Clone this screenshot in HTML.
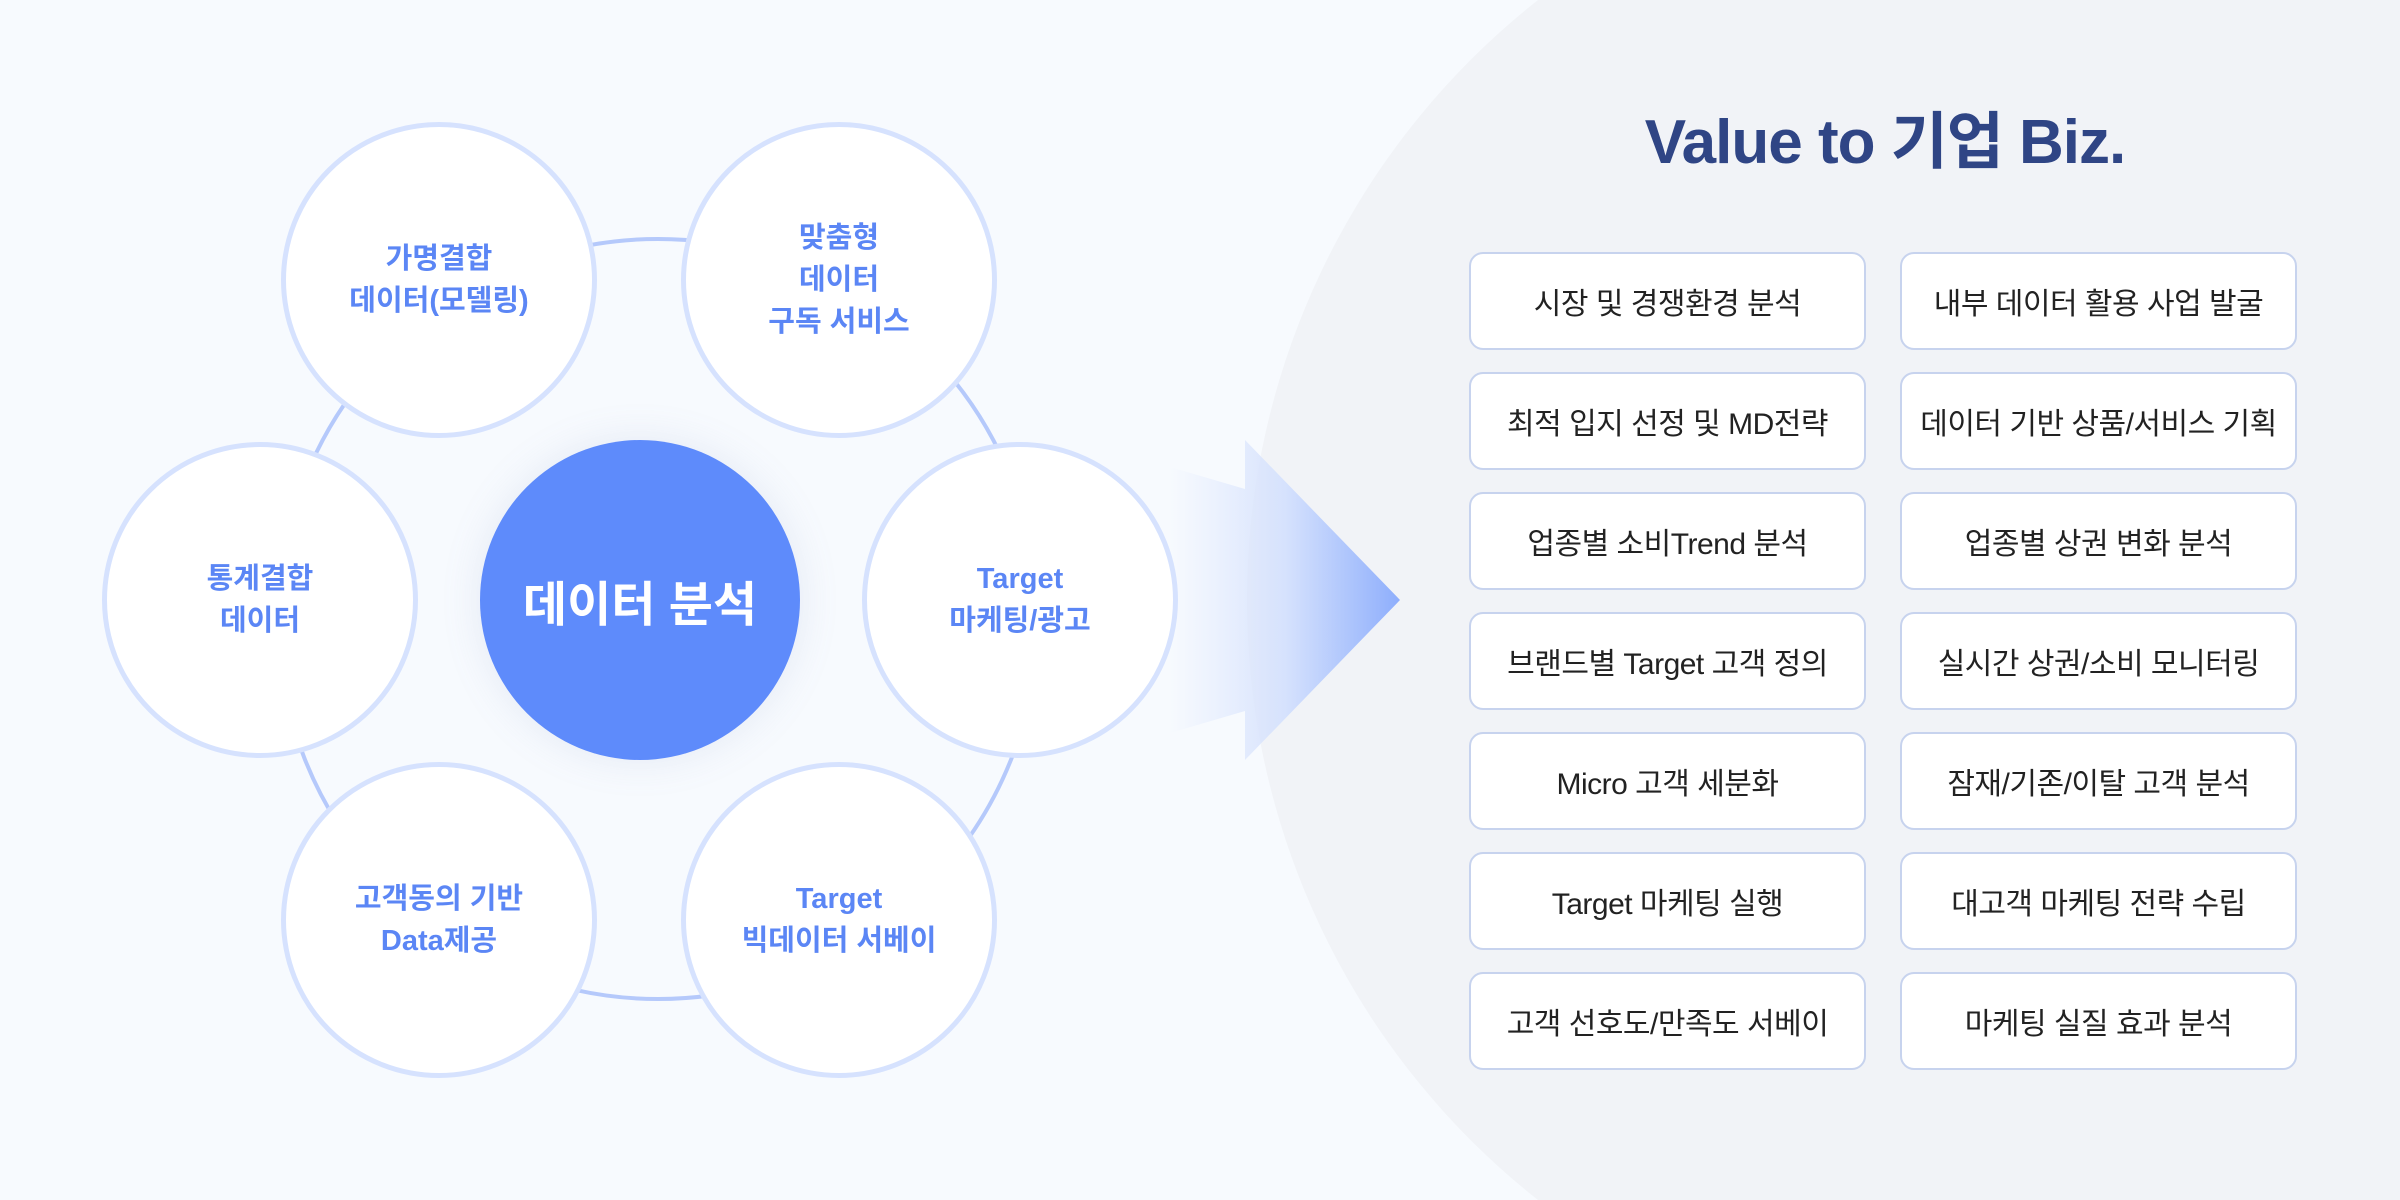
<!DOCTYPE html>
<html><head><meta charset="utf-8"><style>
html,body{margin:0;padding:0;width:2400px;height:1200px;overflow:hidden}
body{background:#f7fafe;position:relative;font-family:"Liberation Sans","Noto Sans CJK KR",sans-serif}
.c{position:absolute;width:306px;height:306px;border-radius:50%;background:#fff;border:5px solid #d6e2fe;display:flex;align-items:center;justify-content:center;text-align:center;color:#5b86f5;font-weight:bold;font-size:29px;line-height:42px}
.mid{position:absolute;left:480px;top:440px;width:320px;height:320px;border-radius:50%;background:#5e8bfb;color:#fff;font-weight:bold;font-size:48px;display:flex;align-items:center;justify-content:center;box-shadow:0 0 40px rgba(120,140,190,0.15)}
.title{position:absolute;left:1500px;width:770px;top:91px;text-align:center;font-size:62px;font-weight:bold;color:#2f4585;letter-spacing:-1px}
.b{position:absolute;width:393px;height:94px;border:2px solid #c7d3ee;border-radius:14px;background:#fff;display:flex;align-items:center;justify-content:center;font-size:30px;color:#222;letter-spacing:-0.5px}
</style></head><body>
<svg width="2400" height="1200" style="position:absolute;left:0;top:0">
<defs><linearGradient id="g" x1="1170" y1="0" x2="1400" y2="0" gradientUnits="userSpaceOnUse"><stop offset="0" stop-color="#dce6fd" stop-opacity="0"/><stop offset="0.5" stop-color="#d6e2fd"/><stop offset="1" stop-color="#8eaefc"/></linearGradient></defs>
<circle cx="2011" cy="600" r="764" fill="#f1f3f7"/>
<circle cx="658" cy="619" r="380" fill="none" stroke="#b5c9fb" stroke-width="4"/>
<polygon points="1170,467 1245,489 1245,440 1400,600 1245,760 1245,711 1170,733" fill="url(#g)"/>
</svg>
<div class="c" style="left:281px;top:122px">가명결합<br>데이터(모델링)</div>
<div class="c" style="left:681px;top:122px">맞춤형<br>데이터<br>구독 서비스</div>
<div class="c" style="left:862px;top:442px">Target<br>마케팅/광고</div>
<div class="c" style="left:681px;top:762px">Target<br>빅데이터 서베이</div>
<div class="c" style="left:281px;top:762px">고객동의 기반<br>Data제공</div>
<div class="c" style="left:102px;top:442px">통계결합<br>데이터</div>
<div class="mid">데이터 분석</div>
<div class="title">Value to 기업 Biz.</div>
<div class="b" style="left:1469px;top:252px">시장 및 경쟁환경 분석</div>
<div class="b" style="left:1900px;top:252px">내부 데이터 활용 사업 발굴</div>
<div class="b" style="left:1469px;top:372px">최적 입지 선정 및 MD전략</div>
<div class="b" style="left:1900px;top:372px">데이터 기반 상품/서비스 기획</div>
<div class="b" style="left:1469px;top:492px">업종별 소비Trend 분석</div>
<div class="b" style="left:1900px;top:492px">업종별 상권 변화 분석</div>
<div class="b" style="left:1469px;top:612px">브랜드별 Target 고객 정의</div>
<div class="b" style="left:1900px;top:612px">실시간 상권/소비 모니터링</div>
<div class="b" style="left:1469px;top:732px">Micro 고객 세분화</div>
<div class="b" style="left:1900px;top:732px">잠재/기존/이탈 고객 분석</div>
<div class="b" style="left:1469px;top:852px">Target 마케팅 실행</div>
<div class="b" style="left:1900px;top:852px">대고객 마케팅 전략 수립</div>
<div class="b" style="left:1469px;top:972px">고객 선호도/만족도 서베이</div>
<div class="b" style="left:1900px;top:972px">마케팅 실질 효과 분석</div>
</body></html>
